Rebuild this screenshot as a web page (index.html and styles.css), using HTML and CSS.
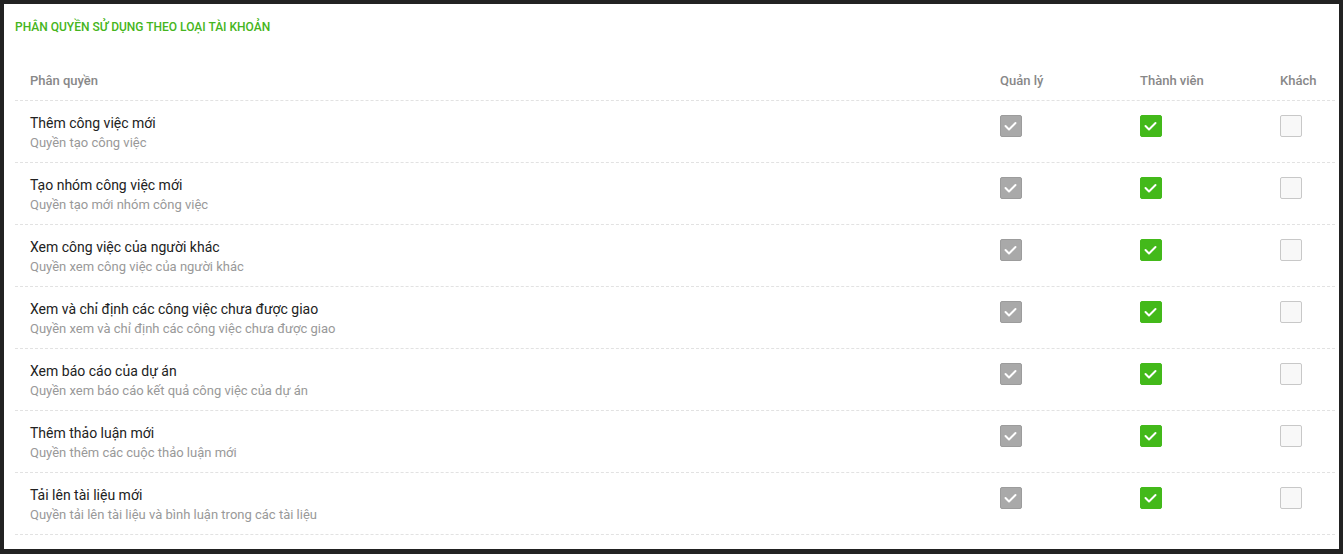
FILE: index.html
```html
<!DOCTYPE html>
<html lang="vi">
<head>
    <meta charset="UTF-8">
    <meta name="viewport" content="width=device-width, initial-scale=1.0">
    <title>Phân quyền sử dụng</title>
    <link rel="stylesheet" href="styles.css">
</head>
<body>
    <div class="panel">
        <h2 class="panel-title">Phân quyền sử dụng theo loại tài khoản</h2>

        <div class="perm-table">
            <div class="perm-row head">
                <div class="cell">Phân quyền</div>
                <div class="cell">Quản lý</div>
                <div class="cell">Thành viên</div>
                <div class="cell">Khách</div>
            </div>

            <div class="perm-row">
                <div class="cell name">
                    <div class="title">Thêm công việc mới</div>
                    <div class="desc">Quyền tạo công việc</div>
                </div>
                <div class="cell"><span class="check locked"><svg viewBox="0 0 22 22"><polyline points="5.5,11 9,14.5 15.5,8"/></svg></span></div>
                <div class="cell"><span class="check on"><svg viewBox="0 0 22 22"><polyline points="5.5,11 9,14.5 15.5,8"/></svg></span></div>
                <div class="cell"><span class="check"></span></div>
            </div>

            <div class="perm-row">
                <div class="cell name">
                    <div class="title">Tạo nhóm công việc mới</div>
                    <div class="desc">Quyền tạo mới nhóm công việc</div>
                </div>
                <div class="cell"><span class="check locked"><svg viewBox="0 0 22 22"><polyline points="5.5,11 9,14.5 15.5,8"/></svg></span></div>
                <div class="cell"><span class="check on"><svg viewBox="0 0 22 22"><polyline points="5.5,11 9,14.5 15.5,8"/></svg></span></div>
                <div class="cell"><span class="check"></span></div>
            </div>

            <div class="perm-row">
                <div class="cell name">
                    <div class="title">Xem công việc của người khác</div>
                    <div class="desc">Quyền xem công việc của người khác</div>
                </div>
                <div class="cell"><span class="check locked"><svg viewBox="0 0 22 22"><polyline points="5.5,11 9,14.5 15.5,8"/></svg></span></div>
                <div class="cell"><span class="check on"><svg viewBox="0 0 22 22"><polyline points="5.5,11 9,14.5 15.5,8"/></svg></span></div>
                <div class="cell"><span class="check"></span></div>
            </div>

            <div class="perm-row">
                <div class="cell name">
                    <div class="title">Xem và chỉ định các công việc chưa được giao</div>
                    <div class="desc">Quyền xem và chỉ định các công việc chưa được giao</div>
                </div>
                <div class="cell"><span class="check locked"><svg viewBox="0 0 22 22"><polyline points="5.5,11 9,14.5 15.5,8"/></svg></span></div>
                <div class="cell"><span class="check on"><svg viewBox="0 0 22 22"><polyline points="5.5,11 9,14.5 15.5,8"/></svg></span></div>
                <div class="cell"><span class="check"></span></div>
            </div>

            <div class="perm-row">
                <div class="cell name">
                    <div class="title">Xem báo cáo của dự án</div>
                    <div class="desc">Quyền xem báo cáo kết quả công việc của dự án</div>
                </div>
                <div class="cell"><span class="check locked"><svg viewBox="0 0 22 22"><polyline points="5.5,11 9,14.5 15.5,8"/></svg></span></div>
                <div class="cell"><span class="check on"><svg viewBox="0 0 22 22"><polyline points="5.5,11 9,14.5 15.5,8"/></svg></span></div>
                <div class="cell"><span class="check"></span></div>
            </div>

            <div class="perm-row">
                <div class="cell name">
                    <div class="title">Thêm thảo luận mới</div>
                    <div class="desc">Quyền thêm các cuộc thảo luận mới</div>
                </div>
                <div class="cell"><span class="check locked"><svg viewBox="0 0 22 22"><polyline points="5.5,11 9,14.5 15.5,8"/></svg></span></div>
                <div class="cell"><span class="check on"><svg viewBox="0 0 22 22"><polyline points="5.5,11 9,14.5 15.5,8"/></svg></span></div>
                <div class="cell"><span class="check"></span></div>
            </div>

            <div class="perm-row">
                <div class="cell name">
                    <div class="title">Tải lên tài liệu mới</div>
                    <div class="desc">Quyền tải lên tài liệu và bình luận trong các tài liệu</div>
                </div>
                <div class="cell"><span class="check locked"><svg viewBox="0 0 22 22"><polyline points="5.5,11 9,14.5 15.5,8"/></svg></span></div>
                <div class="cell"><span class="check on"><svg viewBox="0 0 22 22"><polyline points="5.5,11 9,14.5 15.5,8"/></svg></span></div>
                <div class="cell"><span class="check"></span></div>
            </div>
        </div>
    </div>
</body>
</html>
```

FILE: styles.css
```css
html, body {
    height: 100%;
}
body {
    font-family: Roboto, "Liberation Sans", Arial, sans-serif;
    margin: 0;
    padding: 4px 4px 5px 4px;
    box-sizing: border-box;
    background-color: #222;
    overflow: hidden;
}
.panel {
    background-color: #fff;
    height: 100%;
    padding: 15px 4px 15px 11px;
    box-sizing: border-box;
}
.panel-title {
    margin: 0 0 26px;
    font-size: 12px;
    line-height: 16px;
    font-weight: 500;
    text-transform: uppercase;
    color: #45b520;
}
.perm-row {
    display: grid;
    grid-template-columns: 1fr 140px 140px 70px;
    border-bottom: 1px dashed #e2e2e2;
    height: 62px;
    box-sizing: border-box;
}
.perm-row.head {
    height: 40px;
    align-items: center;
    font-size: 13px;
    font-weight: 500;
    color: #888;
}
.cell {
    padding-left: 15px;
}
.perm-row .cell {
    padding-top: 14px;
}
.perm-row.head .cell {
    padding-top: 0;
}
.perm-row .cell.name {
    padding-top: 12px;
}
.title {
    font-size: 14px;
    line-height: 20px;
    color: #222;
}
.desc {
    font-size: 13px;
    line-height: 19px;
    color: #999;
}
.check {
    display: block;
    width: 22px;
    height: 22px;
    box-sizing: border-box;
    border: 1px solid #c8c8c8;
    border-radius: 2px;
    background-color: #f8f8f8;
}
.check svg {
    display: block;
    width: 22px;
    height: 22px;
    margin: -1px;
}
.check svg polyline {
    fill: none;
    stroke: #fff;
    stroke-width: 2;
    stroke-linecap: round;
    stroke-linejoin: round;
}
.check.locked {
    background-color: #a9a9a9;
    border-color: #9c9c9c;
}
.check.on {
    background-color: #43b91a;
    border-color: #43b91a;
}
```
